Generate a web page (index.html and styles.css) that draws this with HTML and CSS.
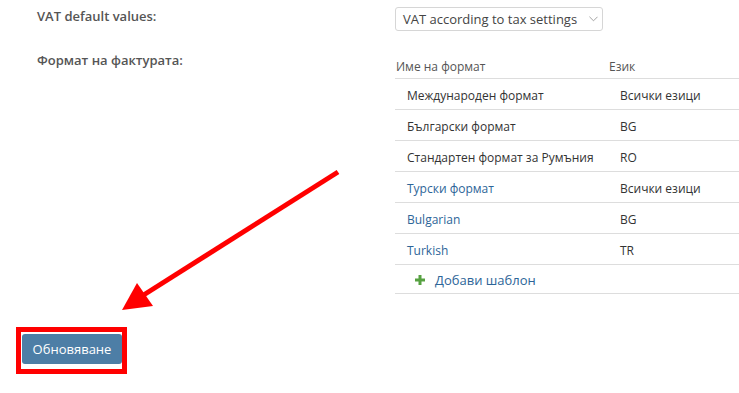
FILE: index.html
```html
<!DOCTYPE html>
<html lang="bg">
<head>
  <meta charset="UTF-8" />
  <title>Настройки на фактурата</title>
  <link rel="stylesheet" href="styles.css">
</head>
<body>

  <div class="settings">
    <div class="form-row">
      <div class="form-label">VAT default values:</div>
      <div class="form-field">
        <div class="select-box">
          <span>VAT according to tax settings</span>
          <svg class="chevron" viewBox="0 0 10 6"><path d="M0.5 0.5 L5 5 L9.5 0.5" /></svg>
        </div>
      </div>
    </div>

    <div class="form-row formats-row">
      <div class="form-label">Формат на фактурата:</div>
      <div class="form-field">
        <table class="formats">
          <thead>
            <tr><th class="col-name">Име на формат</th><th>Език</th></tr>
          </thead>
          <tbody>
            <tr><td>Международен формат</td><td>Всички езици</td></tr>
            <tr><td>Български формат</td><td>BG</td></tr>
            <tr><td>Стандартен формат за Румъния</td><td>RO</td></tr>
            <tr><td><a href="#">Турски формат</a></td><td>Всички езици</td></tr>
            <tr><td><a href="#">Bulgarian</a></td><td>BG</td></tr>
            <tr><td><a href="#">Turkish</a></td><td>TR</td></tr>
            <tr class="add-row">
              <td colspan="2">
                <a href="#" class="add-link">
                  <svg class="plus" viewBox="0 0 10 10"><path d="M3.5 0h3v3.5H10v3H6.5V10h-3V6.5H0v-3h3.5z"/></svg>
                  Добави шаблон
                </a>
              </td>
            </tr>
          </tbody>
        </table>
      </div>
    </div>

    <div class="actions">
      <button class="update-btn">Обновяване</button>
    </div>
  </div>

  <!-- annotation over the page -->
  <div class="highlight"></div>
  <svg class="arrow" width="739" height="393" viewBox="0 0 739 393">
    <line x1="338" y1="172" x2="142" y2="296" />
    <polygon points="122,310 137,283 153,306" />
  </svg>

</body>
</html>
```

FILE: styles.css
```css
:root {
  --font-sans: 'Open Sans', 'Noto Sans', sans-serif;
  --text-color: #333;
  --label-color: #555;
  --link-color: #2d6598;
  --line-color: #ddd;
  --button-bg: #4d7ea6;
}

body {
  margin: 0;
  font-family: var(--font-sans);
  font-size: 13px;
  color: var(--text-color);
  background: #fff;
  position: relative;
  height: 393px;
  overflow: hidden;
}

.settings {
  padding-top: 7px;
}

.form-row {
  display: flex;
}

.form-label {
  flex: 0 0 395px;
  padding-left: 37px;
  box-sizing: border-box;
  font-weight: 600;
  color: var(--label-color);
  line-height: 18px;
}

.form-field {
  flex: 1;
}

.select-box {
  width: 208px;
  height: 24px;
  box-sizing: border-box;
  border: 1px solid #d6d6d6;
  border-radius: 3px;
  display: flex;
  align-items: center;
  justify-content: space-between;
  padding: 0 4px 0 7px;
  color: #444;
}

.chevron {
  width: 9px;
  height: 6px;
  fill: none;
  stroke: #999;
  stroke-width: 1;
}

.formats-row {
  margin-top: 20px;
}

.formats {
  border-collapse: collapse;
  table-layout: fixed;
  width: 100%;
  font-size: 12px;
}

.formats th {
  text-align: left;
  font-weight: 400;
  color: #555;
  padding: 8px 1px 4px;
  line-height: 15px;
  border-bottom: 1px solid var(--line-color);
}

.formats .col-name {
  width: 213px;
  box-sizing: border-box;
}

.formats td {
  padding: 3px 12px 0;
  height: 27px;
  line-height: 18px;
  border-bottom: 1px solid var(--line-color);
  white-space: nowrap;
}

.formats a {
  color: var(--link-color);
  text-decoration: none;
}

.add-row td {
  height: 25px;
  padding-left: 20px;
}

.add-link {
  display: inline-flex;
  align-items: center;
  gap: 10px;
  font-size: 13px;
}

.plus {
  width: 10px;
  height: 10px;
  fill: #56a141;
}

.actions {
  padding: 40px 0 0 22px;
}

.update-btn {
  font-family: var(--font-sans);
  font-size: 13px;
  color: #fff;
  background-color: var(--button-bg);
  border: none;
  border-radius: 3px;
  width: 100px;
  height: 30px;
  padding: 0;
  cursor: pointer;
}

.highlight {
  position: absolute;
  left: 16px;
  top: 327px;
  width: 101px;
  height: 37px;
  border: 5px solid #f00;
}

.arrow {
  position: absolute;
  left: 0;
  top: 0;
  pointer-events: none;
}

.arrow line {
  stroke: #f00;
  stroke-width: 5;
}

.arrow polygon {
  fill: #f00;
}
```
